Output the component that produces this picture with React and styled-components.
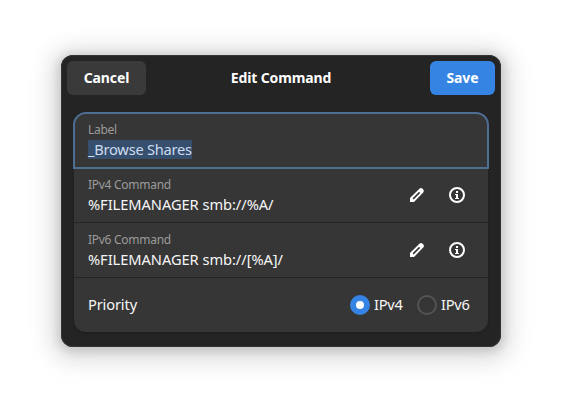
import React from "react";
import styled, { createGlobalStyle } from "styled-components";

const Global = createGlobalStyle`
  * { box-sizing: border-box; }
  body { margin: 0; background: #fff; font-family: "Noto Sans", sans-serif; color: #fff; overflow: hidden; }
`;

const Stage = styled.main`
  padding: 55px 61px;
  height: 414px;
`;

const Dialog = styled.section`
  width: 440px;
  height: 292px;
  border-radius: 12px;
  background: #242424;
  box-shadow: 0 2px 10px 3px rgba(0, 0, 0, 0.13), 0 3px 20px 10px rgba(0, 0, 0, 0.09), 0 6px 30px 14px rgba(0, 0, 0, 0.04), inset 0 0 0 1px #343434;
`;

const HeaderBar = styled.header`
  display: flex;
  align-items: center;
  justify-content: space-between;
  height: 46px;
  padding: 0 6px;
`;

const Title = styled.h1`
  margin: 0;
  padding: 0 14px 2px 0;
  flex: 1;
  text-align: center;
  font-size: 14px;
  font-weight: 700;
  letter-spacing: -0.12px;
`;

const Button = styled.button`
  height: 34px;
  width: ${(p) => (p.$primary ? 65 : 79)}px;
  padding: 0 0 2px;
  border: 0;
  border-radius: 6px;
  background: ${(p) => (p.$primary ? "#3584e4" : "#3a3a3a")};
  color: #fff;
  font: 700 14px "Noto Sans", sans-serif;
  letter-spacing: -0.1px;
`;

const List = styled.div`
  margin: 12px 13px 0;
  border-radius: 12px;
  background: #363636;
  box-shadow: 0 1px 3px rgba(0, 0, 0, 0.22);
`;

const Row = styled.div`
  display: flex;
  align-items: center;
  height: ${(p) => (p.$last ? 54 : 55)}px;
  padding: 0 18px 0 14px;
  border-bottom: ${(p) => (p.$last ? 0 : "1px solid #242424")};
`;

const FocusedRow = styled(Row)`
  height: 55px;
  padding-bottom: 2px;
  border: 0;
  border-radius: 12px 12px 0 0;
  outline: 2px solid #4f6e93;
  outline-offset: -1px;
`;

const Field = styled.div`
  flex: 1;
`;

const Caption = styled.div`
  font-size: 12px;
  line-height: 18px;
  letter-spacing: -0.27px;
  color: #9b9b9b;
`;

const Value = styled.span`
  display: block;
  width: max-content;
  margin-top: 1px;
  font-size: 14.67px;
  line-height: 19px;
  letter-spacing: ${(p) => p.$tracking || -0.06}px;
  color: ${(p) => (p.$selected ? "#cddcf0" : "#f6f6f6")};
  background: ${(p) => (p.$selected ? "#364f6e" : "transparent")};
`;

const RowLabel = styled(Value)`
  flex: 1;
  margin: 0 0 1px;
`;

const Actions = styled.div`
  display: flex;
  gap: 24px;
  margin-right: 5px;
  svg { display: block; }
`;

const RadioGroup = styled.div`
  display: flex;
  gap: 14px;
`;

const RadioOption = styled.label`
  display: flex;
  align-items: center;
  gap: 4px;
`;

const RadioText = styled.span`
  width: 29px;
  padding-bottom: 1px;
  font-size: 14.67px;
  line-height: 19px;
  letter-spacing: -0.3px;
  white-space: nowrap;
  color: #f6f6f6;
`;

const RadioDot = styled.span`
  width: 20px;
  height: 20px;
  border-radius: 50%;
  border: ${(p) => (p.$checked ? "6px solid #3584e4" : "2px solid #545454")};
  background: ${(p) => (p.$checked ? "#fff" : "#353535")};
`;

const PencilIcon = () => (
  <svg width="16" height="16" viewBox="0 0 16 16" fill="none">
    <path d="M1 15V11L10.4 1.8Q12.1 .3 13.9 2Q15.8 3.9 14.2 5.6L5 15Z" fill="#fff" />
    <path d="M4.1 11.9L10.6 5.4" stroke="#363636" strokeWidth="1.6" />
  </svg>
);

const InfoIcon = () => (
  <svg width="16" height="16" viewBox="0 0 16 16" fill="none">
    <circle cx="8" cy="8" r="7" stroke="#fff" strokeWidth="2" />
    <path d="M7 4H9V6H7ZM6 7H9V11H10V12H6V11H7V8H6Z" fill="#fff" />
  </svg>
);

const CommandRow = ({ caption, value }) => (
  <Row>
    <Field>
      <Caption>{caption}</Caption>
      <Value>{value}</Value>
    </Field>
    <Actions>
      <PencilIcon />
      <InfoIcon />
    </Actions>
  </Row>
);

export default function App() {
  return (
    <>
      <Global />
      <Stage>
        <Dialog>
          <HeaderBar>
            <Button>Cancel</Button>
            <Title>Edit Command</Title>
            <Button $primary>Save</Button>
          </HeaderBar>
          <List>
            <FocusedRow>
              <Field>
                <Caption>Label</Caption>
                <Value $selected $tracking={-0.25}>_Browse Shares</Value>
              </Field>
            </FocusedRow>
            <CommandRow caption="IPv4 Command" value="%FILEMANAGER smb://%A/" />
            <CommandRow caption="IPv6 Command" value="%FILEMANAGER smb://[%A]/" />
            <Row $last>
              <RowLabel $tracking={-0.15}>Priority</RowLabel>
              <RadioGroup>
                <RadioOption><RadioDot $checked /><RadioText>IPv4</RadioText></RadioOption>
                <RadioOption><RadioDot /><RadioText>IPv6</RadioText></RadioOption>
              </RadioGroup>
            </Row>
          </List>
        </Dialog>
      </Stage>
    </>
  );
}
